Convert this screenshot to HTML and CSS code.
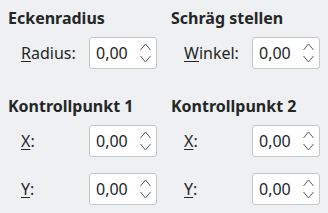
FILE: index.html
```html
<!DOCTYPE html>
<html lang="de">
<head>
  <meta charset="UTF-8">
  <title>Eckenradius</title>
  <link rel="stylesheet" href="styles.css">
</head>
<body>
  <div class="panel">
    <section class="group">
      <h2>Eckenradius</h2>
      <div class="row">
        <label><u>R</u>adius:</label>
        <div class="spin"><span>0,00</span>
          <svg viewBox="0 0 11 22"><path d="M0.5 8 L5.5 2 L10.5 8 M0.5 14 L5.5 20 L10.5 14"/></svg>
        </div>
      </div>
    </section>
    <section class="group">
      <h2>Schräg stellen</h2>
      <div class="row">
        <label><u>W</u>inkel:</label>
        <div class="spin"><span>0,00</span>
          <svg viewBox="0 0 11 22"><path d="M0.5 8 L5.5 2 L10.5 8 M0.5 14 L5.5 20 L10.5 14"/></svg>
        </div>
      </div>
    </section>
    <section class="group">
      <h2>Kontrollpunkt 1</h2>
      <div class="row">
        <label><u>X</u>:</label>
        <div class="spin"><span>0,00</span>
          <svg viewBox="0 0 11 22"><path d="M0.5 8 L5.5 2 L10.5 8 M0.5 14 L5.5 20 L10.5 14"/></svg>
        </div>
      </div>
      <div class="row">
        <label><u>Y</u>:</label>
        <div class="spin"><span>0,00</span>
          <svg viewBox="0 0 11 22"><path d="M0.5 8 L5.5 2 L10.5 8 M0.5 14 L5.5 20 L10.5 14"/></svg>
        </div>
      </div>
    </section>
    <section class="group">
      <h2>Kontrollpunkt 2</h2>
      <div class="row">
        <label><u>X</u>:</label>
        <div class="spin"><span>0,00</span>
          <svg viewBox="0 0 11 22"><path d="M0.5 8 L5.5 2 L10.5 8 M0.5 14 L5.5 20 L10.5 14"/></svg>
        </div>
      </div>
      <div class="row">
        <label><u>Y</u>:</label>
        <div class="spin"><span>0,00</span>
          <svg viewBox="0 0 11 22"><path d="M0.5 8 L5.5 2 L10.5 8 M0.5 14 L5.5 20 L10.5 14"/></svg>
        </div>
      </div>
    </section>
  </div>
</body>
</html>
```

FILE: styles.css
```css
body{
  margin:0;
  background:#eff0f1;
  color:#232627;
  font-family:"Noto Sans", sans-serif;
  font-size:16px;
}
.panel{
  display:grid;
  grid-template-columns:163px 157px;
  row-gap:27px;
  padding:8px 0 0 8px;
}
.group{
  display:flex;
  flex-direction:column;
  row-gap:16px;
}
.group h2{
  margin:0 0 -7px 0;
  font-size:16px;
  font-weight:bold;
  line-height:20px;
}
.row{
  display:grid;
  grid-template-columns:68px 68px;
  align-items:center;
  padding-left:13px;
}
.row label{
  line-height:20px;
}
.row u{
  text-underline-offset:2px;
}
.spin{
  display:flex;
  align-items:center;
  justify-content:space-between;
  box-sizing:border-box;
  height:32px;
  padding:0 5px 0 6px;
  background:white;
  border:1px solid #c4c6c8;
  border-radius:3px;
}
.spin svg{
  width:11px;
  height:22px;
  fill:none;
  stroke:#555759;
  stroke-width:1;
}
```
